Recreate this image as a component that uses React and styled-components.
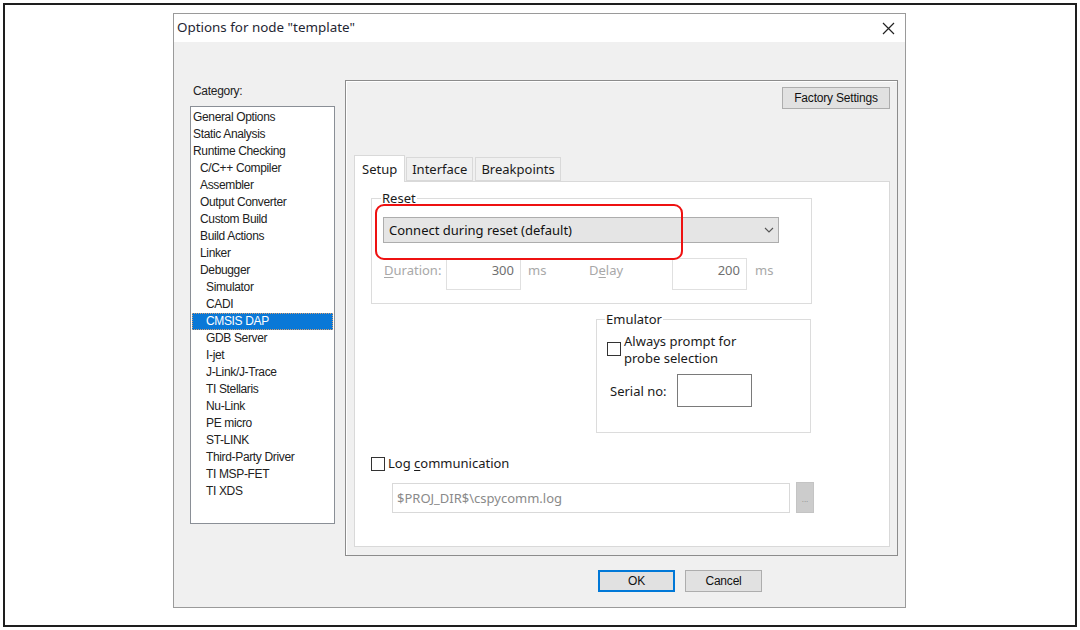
import React from 'react';
import styled, { createGlobalStyle } from 'styled-components';

const GlobalStyle = createGlobalStyle`
  html, body { margin: 0; padding: 0; background: #fff; }
  * { box-sizing: border-box; }
`;

const UI = `"Noto Sans", "Open Sans", sans-serif`;
const CLASSIC = `"Liberation Sans", Arial, sans-serif`;

const Frame = styled.div`
  width: 1074px;
  height: 624px;
  margin: 3px 0 0 3px;
  border: 2px solid #1e1e1e;
  padding: 8px 0 0 168px;
`;

const Dialog = styled.div`
  width: 733px;
  height: 595px;
  border: 1px solid #9a9a9a;
  background: #f0f0f0;
  display: flex;
  flex-direction: column;
`;

const TitleBar = styled.div`
  height: 28px;
  background: #fff;
  display: flex;
  align-items: center;
  justify-content: space-between;
  padding: 0 10px 3px 3px;
  font-family: ${UI};
  font-size: 13.4px;
  color: #1f2633;
`;

const Close = styled.svg`
  width: 13px;
  height: 13px;
  margin-top: 3px;
`;

const Body = styled.div`
  display: flex;
  padding: 38px 0 0 16px;
`;

const LeftCol = styled.div`
  width: 145px;
  display: flex;
  flex-direction: column;
`;

const CatLabel = styled.div`
  font-family: ${CLASSIC};
  font-size: 12px;
  letter-spacing: -0.3px;
  color: #222;
  margin: 4px 0 0 3px;
  height: 22px;
`;

const ListBox = styled.div`
  height: 418px;
  background: #fff;
  border: 1px solid #8a8f96;
  padding: 2px 1px;
`;

const Item = styled.div`
  height: 17px;
  line-height: 17px;
  font-family: ${CLASSIC};
  font-size: 12px;
  letter-spacing: -0.35px;
  color: ${p => (p.$sel ? '#fff' : '#222')};
  background: ${p => (p.$sel ? '#0a78d7' : 'transparent')};
  outline: ${p => (p.$sel ? '1px dotted #d9a070' : 'none')};
  outline-offset: -1px;
  padding-left: ${p => 1 + p.$lvl * 7 - (p.$lvl === 2 ? 1 : 0)}px;
  white-space: nowrap;
`;

const Panel = styled.div`
  margin-left: 10px;
  width: 553px;
  height: 476px;
  border: 1px solid #8c8c8c;
  box-shadow: inset 1px 1px 0 #fff;
  padding: 6px 7px 8px 8px;
  display: flex;
  flex-direction: column;
`;

const TopRow = styled.div`
  display: flex;
  justify-content: flex-end;
`;

const Button = styled.button`
  width: ${p => p.$w || 77}px;
  height: 22px;
  background: #e1e1e1;
  border: 1px solid ${p => (p.$def ? '#0078d7' : '#adadad')};
  box-shadow: ${p => (p.$def ? 'inset 0 0 0 1px #0078d7' : 'none')};
  font-family: ${CLASSIC};
  font-size: 12px;
  letter-spacing: -0.2px;
  color: #111;
  padding: 0;
`;

const TabStrip = styled.div`
  display: flex;
  align-items: flex-end;
  margin-top: 45px;
  height: 27px;
`;

const Tab = styled.div`
  height: ${p => (p.$active ? 27 : 24)}px;
  padding: 0 ${p => (p.$active ? 7 : 5)}px;
  margin-right: ${p => (p.$active ? 1 : 2)}px;
  display: flex;
  align-items: center;
  background: ${p => (p.$active ? '#fff' : '#f0f0f0')};
  border: 1px solid #d9d9d9;
  border-bottom: ${p => (p.$active ? 'none' : '1px solid #d9d9d9')};
  margin-bottom: ${p => (p.$active ? -1 : 0)}px;
  position: relative;
  font-family: ${UI};
  font-size: 13px;
  color: #1a1a1a;
`;

const TabBody = styled.div`
  flex: 1;
  background: #fff;
  border: 1px solid #d9d9d9;
  padding: 9px 0 0 16px;
  display: flex;
  flex-direction: column;
`;

const Group = styled.fieldset`
  position: relative;
  margin: ${p => p.$top || 0}px 0 0 ${p => p.$left || 0}px;
  width: ${p => p.$w}px;
  height: ${p => p.$h}px;
  border: 1px solid #dcdcdc;
  padding: 0 0 0 ${p => p.$pad || 11}px;
  font-family: ${UI};
  font-size: 13px;
  color: #1a1a1a;
`;

const Legend = styled.legend`
  padding: 0 1px;
  margin-left: -2px;
  line-height: 14px;
`;

const Combo = styled.div`
  margin-top: 12px;
  width: 396px;
  height: 26px;
  background: #e5e5e5;
  border: 1px solid #adadad;
  display: flex;
  align-items: center;
  justify-content: space-between;
  padding: 0 4px 0 5px;
  color: #111;
`;

const Highlight = styled.div`
  position: absolute;
  left: 3px;
  top: -1px;
  width: 308px;
  height: 56px;
  border: 2px solid #ee1111;
  border-radius: 9px;
  pointer-events: none;
`;

const Row = styled.div`
  display: flex;
  align-items: ${p => (p.$top ? 'flex-start' : 'center')};
  margin-top: ${p => p.$mt || 0}px;
  margin-left: ${p => p.$ml || 0}px;
`;

const Dim = styled.span`
  color: #a8a8a8;
  width: ${p => p.$w}px;
  margin-left: ${p => p.$ml || 0}px;
  padding-top: 3px;
  line-height: 18px;
  u { text-decoration: underline; text-underline-offset: 2px; }
`;

const NumBox = styled.div`
  width: 75px;
  height: 32px;
  border: 1px solid #e0e0e0;
  display: flex;
  justify-content: flex-end;
  align-items: flex-start;
  padding: 2px 6px 0 0;
  color: #707070;
`;

const Check = styled.span`
  width: 14px;
  height: 14px;
  margin-top: ${p => p.$mt || 0}px;
  border: 1px solid #333;
  background: #fff;
  flex-shrink: 0;
`;

const CheckText = styled.span`
  margin-left: 3px;
  line-height: 17px;
  color: #1a1a1a;
  u { text-decoration: underline; text-underline-offset: 2px; }
`;

const Label = styled.span`
  margin-left: 3px;
`;

const SerialBox = styled.div`
  width: 75px;
  height: 33px;
  margin-left: 10px;
  border: 1px solid #7a7a7a;
  background: #fff;
`;

const LogRow = styled(Row)`
  font-family: ${UI};
  font-size: 13px;
`;

const PathBox = styled.div`
  width: 398px;
  height: 30px;
  border: 1px solid #d9d9d9;
  display: flex;
  align-items: center;
  padding-left: 4px;
  font-family: ${UI};
  font-size: 13px;
  color: #8a8a8a;
`;

const Browse = styled.div`
  width: 18px;
  height: 31px;
  margin-left: 6px;
  margin-top: -2px;
  background: #cccccc;
  border: 1px solid #c4c4c4;
  display: flex;
  align-items: center;
  justify-content: center;
  font-family: ${CLASSIC};
  font-size: 8px;
  color: #888;
  padding-top: 4px;
`;

const Footer = styled.div`
  display: flex;
  gap: 10px;
  padding-left: 424px;
  margin-top: 14px;
`;

const categories = [
  ['General Options', 0],
  ['Static Analysis', 0],
  ['Runtime Checking', 0],
  ['C/C++ Compiler', 1],
  ['Assembler', 1],
  ['Output Converter', 1],
  ['Custom Build', 1],
  ['Build Actions', 1],
  ['Linker', 1],
  ['Debugger', 1],
  ['Simulator', 2],
  ['CADI', 2],
  ['CMSIS DAP', 2],
  ['GDB Server', 2],
  ['I-jet', 2],
  ['J-Link/J-Trace', 2],
  ['TI Stellaris', 2],
  ['Nu-Link', 2],
  ['PE micro', 2],
  ['ST-LINK', 2],
  ['Third-Party Driver', 2],
  ['TI MSP-FET', 2],
  ['TI XDS', 2],
];

const App = () => {
  return (
    <>
      <GlobalStyle />
      <Frame>
        <Dialog>
          <TitleBar>
            <span>Options for node "template"</span>
            <Close viewBox="0 0 13 13">
              <path d="M1 1 L12 12 M12 1 L1 12" stroke="#222" strokeWidth="1.2" fill="none" />
            </Close>
          </TitleBar>
          <Body>
            <LeftCol>
              <CatLabel>Category:</CatLabel>
              <ListBox>
                {categories.map(([name, lvl]) => (
                  <Item key={name} $lvl={lvl} $sel={name === 'CMSIS DAP'}>{name}</Item>
                ))}
              </ListBox>
            </LeftCol>
            <Panel>
              <TopRow>
                <Button $w={108}>Factory Settings</Button>
              </TopRow>
              <TabStrip>
                <Tab $active>Setup</Tab>
                <Tab>Interface</Tab>
                <Tab>Breakpoints</Tab>
              </TabStrip>
              <TabBody>
                <Group $w={441} $h={113}>
                  <Legend>Reset</Legend>
                  <Combo>
                    <span>Connect during reset (default)</span>
                    <svg width="10" height="6" viewBox="0 0 10 6">
                      <path d="M1 1 L5 5 L9 1" stroke="#555" strokeWidth="1.1" fill="none" />
                    </svg>
                  </Combo>
                  <Highlight />
                  <Row $mt={15} $top>
                    <Dim $w={62} $ml={1}><u>D</u>uration:</Dim>
                    <NumBox>300</NumBox>
                    <Dim $w={61} $ml={7}>ms</Dim>
                    <Dim $w={83}>D<u>e</u>lay</Dim>
                    <NumBox>200</NumBox>
                    <Dim $ml={8}>ms</Dim>
                  </Row>
                </Group>
                <Group $top={8} $left={225} $w={215} $h={121} $pad={10}>
                  <Legend>Emulator</Legend>
                  <Row $mt={7} $top>
                    <Check $mt={9} />
                    <CheckText>Always prompt for<br />probe selection</CheckText>
                  </Row>
                  <Row $mt={7}>
                    <Label>Serial no:</Label>
                    <SerialBox />
                  </Row>
                </Group>
                <LogRow $mt={22}>
                  <Check />
                  <CheckText>Log <u>c</u>ommunication</CheckText>
                </LogRow>
                <Row $mt={11} $ml={21}>
                  <PathBox>$PROJ_DIR$\cspycomm.log</PathBox>
                  <Browse>...</Browse>
                </Row>
              </TabBody>
            </Panel>
          </Body>
          <Footer>
            <Button $def>OK</Button>
            <Button>Cancel</Button>
          </Footer>
        </Dialog>
      </Frame>
    </>
  );
};

export default App;
